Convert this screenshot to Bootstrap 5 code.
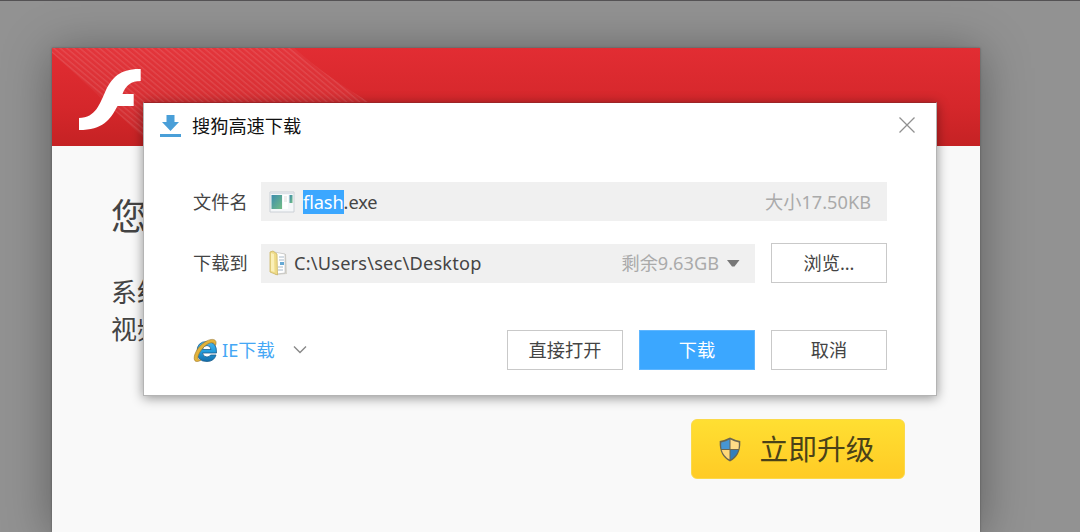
<!DOCTYPE html>
<html lang="zh-CN">
<head>
<meta charset="utf-8">
<meta name="viewport" content="width=device-width, initial-scale=1">
<title>搜狗高速下载</title>
<link href="https://cdn.jsdelivr.net/npm/bootstrap@5.3.0/dist/css/bootstrap.min.css" rel="stylesheet">
<style>
body{background:#929292;font-family:"Noto Sans","Noto Sans CJK SC",sans-serif;font-size:18.2px;line-height:24px;color:#444;height:532px;overflow:hidden;border-top:1px solid #545254;padding:47px 0 0 52px}
svg{display:block;flex:none}
.sheet{width:928px;height:484px;background:#f9f9f9;box-shadow:0 0 2px #555,0 4px 45px rgba(0,0,0,.36)}
.banner{height:98px;background:linear-gradient(#e22d33,#d5272b 60%,#c52224)}
.notice{padding:47px 59px 0}
.headline{font-size:36px;line-height:48px;margin-bottom:33px}
.copy{font-size:26px;line-height:37px}
.upgrade{width:214px;height:60px;border:1px solid #fbd94a;border-radius:6px;background:linear-gradient(#ffdf32,#ffcb25);font-size:28.8px;color:#4a4218;margin:71px 16px 0 0;gap:18px}
.upgrade svg{margin-left:-2px}
.dialog-box{left:143px;top:102px;width:794px;height:294px;background:#fff;border:1px solid #b4b4b4;border-top-color:#9d2427;box-shadow:0 2px 11px rgba(0,0,0,.42);padding:8px 49px 0}
.titlebar{height:30px;color:#111;margin:0 -32px 0 -33px;padding-right:3px}
.titlebar .btn{margin-top:-3px}
.caption-text{margin-left:11px}
.tag{width:68px}
.slot{height:39px;background:#f0f0f0}
.path-text{letter-spacing:.2px;padding-left:1px}
.hint{color:#aaa}
.picked{background:#3ba7ff;color:#fff}
.act{width:116px;height:40px;border:1px solid #c9c9c9;border-radius:0;background:#fff;color:#444;font-size:18.2px;line-height:24px;padding:0}
.act-main{background:#3ba7ff;border-color:#5fb6ff;color:#fff}
.ie{color:#45a7f5}
</style>
</head>
<body>
<main class="sheet">
  <header class="banner">
    <svg width="928" height="98" viewBox="0 0 928 98">
      <defs>
        <pattern id="stripes" width="4.2" height="12" patternUnits="userSpaceOnUse" patternTransform="rotate(-50)"><path d="M1 0V12" stroke="#fff" stroke-width="1.3" opacity=".11"/></pattern>
      </defs>
      <path d="M0 0H242Q275 30 335 65L350 98H100C75 75 45 45 0 5Z" fill="#fff" opacity=".04"/>
      <path d="M0 0H242Q275 30 335 65L350 98H100C75 75 45 45 0 5Z" fill="url(#stripes)"/>
      <path d="M88.700 21C68 20.500 60 30 54 42C48 55 44 70 27 70V82C51 82 58 72 65.500 58H81.700V46H70.500C74 37 79 33 88.700 33Z" fill="#fff"/>
    </svg>
  </header>
  <section class="notice">
    <h1 class="headline fw-normal">您的</h1>
    <p class="copy m-0">系统<br>视频</p>
    <div class="d-flex justify-content-end">
      <button class="btn upgrade d-flex align-items-center justify-content-center p-0" type="button">
        <svg width="22" height="25" viewBox="0 0 22 25"><path d="M11 .5Q16 3 21.300 4Q22 19 11 24.500Q0 19 .7 4Q6 3 11 .5Z" fill="#6b6650"/><path d="M10.500 2.500V12H2.500Q2 9 2.200 5.400Q7 4.500 10.500 2.500Z" fill="#4796d3"/><path d="M11.500 12V2.500Q15 4.500 19.800 5.400Q20 9 19.500 12Z" fill="#ffdc87"/><path d="M2.700 13H10.500V22.600Q4.500 19 2.700 13Z" fill="#ffd878"/><path d="M11.500 13H19.300Q17.500 19 11.500 22.600Z" fill="#347fbc"/></svg>
        <span>立即升级</span>
      </button>
    </div>
  </section>
</main>

<div class="dialog-box position-absolute" role="dialog" aria-label="搜狗高速下载">
  <div class="titlebar d-flex align-items-center">
    <svg width="21" height="23" viewBox="0 0 21 23"><path d="M6.500 0H14.500V7H19L10.500 16L2 7H6.500Z" fill="#4a9fd8"/><path d="M0 19H21V22H0Z" fill="#4a9fd8"/></svg>
    <span class="caption-text">搜狗高速下载</span>
    <button class="btn border-0 p-0 ms-auto" type="button" aria-label="关闭"><svg width="18" height="18" viewBox="0 0 18 18"><path d="M1.500 1.500L16.500 16.500M16.500 1.500L1.500 16.500" stroke="#909090" stroke-width="1.300"/></svg></button>
  </div>

  <div class="d-flex align-items-center" style="margin-top:41px">
    <span class="tag">文件名</span>
    <div class="slot d-flex align-items-center flex-grow-1 ps-2">
      <svg width="26" height="22" viewBox="0 0 26 22"><defs><linearGradient id="app" x2="1" y2="1"><stop stop-color="#3c8cad"/><stop offset="1" stop-color="#73bd85"/></linearGradient></defs><path d="M1 1H25V21H1Z" fill="#f5f7f9" stroke="#cbd0d6"/><path d="M1.500 1.500H24.500V3H1.500Z" fill="#dce1e7"/><path d="M2.500 4H13V18H2.500Z" fill="url(#app)"/><path d="M14 4H19V18H14Z" fill="#fff"/><path d="M20.500 4H23.500V12H20.500Z" fill="url(#app)"/><path d="M15 6H18M15 8H18M15 10H18" stroke="#ddd"/></svg>
      <span class="ms-2" style="letter-spacing:-.1px"><span class="picked">flash</span>.exe</span>
      <span class="hint ms-auto pe-3">大小17.50KB</span>
    </div>
  </div>

  <div class="d-flex align-items-center" style="margin-top:22px">
    <span class="tag">下载到</span>
    <div class="slot d-flex align-items-center flex-grow-1 ps-2">
      <svg width="20" height="26" viewBox="0 0 20 26"><path d="M5 3L17 4L18 24L6 25Z" fill="#d5d3ca"/><path d="M5 2L16 4V23L8 24Z" fill="#fff" stroke="#b6b6b6" stroke-width=".6"/><path d="M10 7H15M10 10H15M9 17H14M9 20H14" stroke="#a9bac9"/><path d="M11 12H15V15H11Z" fill="#67a9d4"/><path d="M1 2L4 1L8 4L8.500 25L1 22Z" fill="#efdb88" stroke="#cbb665" stroke-width=".8"/><path d="M2 3L5 4L5.500 22L2 21Z" fill="#fbf0b8"/></svg>
      <span class="path-text ms-1">C:\Users\sec\Desktop</span>
      <span class="hint ms-auto">剩余9.63GB</span>
      <svg class="ms-2" width="28" height="7" viewBox="0 0 28 7"><path d="M0 0H12.500L7.500 6.500H5Z" fill="#777"/></svg>
    </div>
    <button class="btn act ms-3" type="button">浏览...</button>
  </div>

  <div class="d-flex align-items-center" style="margin-top:47px">
    <svg width="25" height="25" viewBox="0 0 25 25"><defs><linearGradient id="e" x2="0" y2="1"><stop stop-color="#48b5eb"/><stop offset=".5" stop-color="#239ddd"/><stop offset="1" stop-color="#126da9"/></linearGradient></defs><path d="M23.500 15H9.500Q10 19 14 19Q16.500 19 17.500 17H23Q21 23.500 14 23.500Q4 23.500 4 13.500Q4 3.500 14 3.500Q24 3.500 23.500 15ZM9.500 11.500H18Q17.500 7.500 14 7.500Q10 7.500 9.500 11.500Z" fill="url(#e)" stroke="#195c8b" stroke-width=".8"/><path d="M22.500 7.500C25 1 19-.5 12 4C4 9 0 18 1.500 22C2.500 24.500 6 23.500 8 22C4 22.500 4 19 7 14C11 7 20 1 22.500 7.500Z" fill="#e3b33b" stroke="#99762b" stroke-width=".6"/></svg>
    <span class="ie ms-1">IE下载</span>
    <svg class="ms-3" width="18" height="10" viewBox="0 0 18 10"><path d="M3 1.500L9 7.500L15 1.500" fill="none" stroke="#888" stroke-width="1.400"/></svg>
    <div class="d-flex ms-auto gap-3">
      <button class="btn act" type="button">直接打开</button>
      <button class="btn act act-main" type="button">下载</button>
      <button class="btn act" type="button">取消</button>
    </div>
  </div>
</div>
<script src="https://cdn.jsdelivr.net/npm/bootstrap@5.3.0/dist/js/bootstrap.bundle.min.js"></script>
</body>
</html>
